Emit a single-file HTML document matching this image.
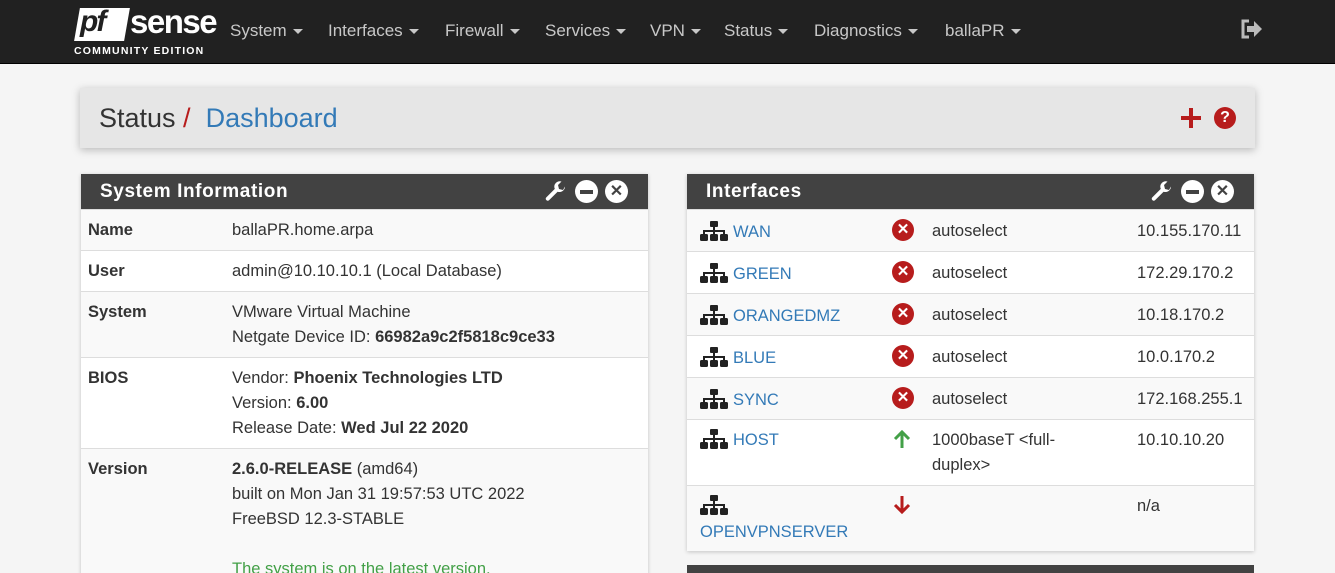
<!DOCTYPE html>
<html><head><meta charset="utf-8"><style>
*{box-sizing:border-box;margin:0;padding:0}
html,body{width:1335px;height:573px;overflow:hidden}
body{background:#f5f5f5;font-family:"Liberation Sans",sans-serif;font-size:16.5px;color:#333;position:relative}
.nav{position:absolute;left:0;top:0;width:1335px;height:64px;background:#212121;border-bottom:1px solid #000}
.nav .m{position:absolute;top:21px;color:#c8c8c8;font-size:17px}
.car{display:inline-block;width:0;height:0;border-left:5px solid transparent;border-right:5px solid transparent;border-top:5px solid #c8c8c8;vertical-align:middle;margin-left:6px}
.ab{position:absolute}
.crumb{position:absolute;left:80px;top:88px;width:1175px;height:60px;background:#e6e6e6;box-shadow:0 2px 8px rgba(0,0,0,.25)}
.panel{position:absolute;background:#fff;box-shadow:0 1px 4px rgba(0,0,0,.2);overflow:hidden}
.ph{position:absolute;left:0;top:0;right:0;height:35px;background:#424242;color:#fff;font-weight:bold;font-size:19px;padding:7px 19px;letter-spacing:.6px}
.row{position:absolute;left:0;right:0;border-top:1px solid #ddd;line-height:25px}
.g{background:#f9f9f9}
.lbl{position:absolute;left:7px;font-weight:bold}
.val{position:absolute;left:151px}
a{color:#337ab7;text-decoration:none}
.x{position:absolute;width:22px;height:22px;border-radius:50%;background:#b71c1c;color:#fff;font-weight:bold;font-size:15px;text-align:center;line-height:22px}
</style></head><body>
<div class="nav">
 <div class="ab" style="left:77px;top:8px;width:50px;height:33px;background:#fff;transform:skewX(-10deg)"></div>
 <div class="ab" style="left:80px;top:5px;font-size:30px;font-weight:bold;font-style:italic;color:#212121;letter-spacing:-2px">pf</div>
 <div class="ab" style="left:130px;top:3px;font-size:33px;font-weight:bold;color:#fff;letter-spacing:-1.5px">sense</div>
 <div class="ab" style="left:74px;top:45px;font-size:10.5px;font-weight:bold;color:#fff;letter-spacing:1.2px">COMMUNITY EDITION</div>
 <div class="m" style="left:230px">System<span class="car"></span></div>
 <div class="m" style="left:328px">Interfaces<span class="car"></span></div>
 <div class="m" style="left:445px">Firewall<span class="car"></span></div>
 <div class="m" style="left:545px">Services<span class="car"></span></div>
 <div class="m" style="left:650px">VPN<span class="car"></span></div>
 <div class="m" style="left:724px">Status<span class="car"></span></div>
 <div class="m" style="left:814px">Diagnostics<span class="car"></span></div>
 <div class="m" style="left:945px">ballaPR<span class="car"></span></div>
 <svg class="ab" style="left:1240px;top:19px" width="24" height="20" viewBox="0 0 24 20"><path d="M9 2H3v16h6" fill="none" stroke="#bbb" stroke-width="3"/><path d="M7 7h7V2l8 8-8 8v-5H7z" fill="#bbb"/></svg>
</div>
<div class="crumb">
 <div class="ab" style="left:19px;top:15px;font-size:27px;color:#333">Status <span style="color:#b71c1c">/</span>&nbsp;&nbsp;<span style="color:#337ab7">Dashboard</span></div>
 <svg class="ab" style="left:1101px;top:20px" width="20" height="20"><path d="M10 0v20M0 10h20" stroke="#b71c1c" stroke-width="4"/></svg>
 <div class="x" style="left:1134px;top:19px;font-size:16px">?</div>
</div>

<svg width="0" height="0" style="position:absolute"><defs>
<symbol id="wr" viewBox="0 0 24 24"><path d="M21 6.5a5.5 5.5 0 0 1-7.4 5.2L5 20.3a2 2 0 0 1-2.8-2.8l8.6-8.6A5.5 5.5 0 0 1 17.5 1.5l-3.5 3.5 1 4 4 1z" fill="#fff"/></symbol>
<symbol id="net" viewBox="0 0 30 20"><rect x="11" y="0" width="8" height="6" rx="1"/><rect x="14" y="6" width="2" height="4"/><rect x="4" y="9" width="22" height="2"/><rect x="4" y="9" width="2" height="5"/><rect x="24" y="9" width="2" height="5"/><rect x="14" y="9" width="2" height="5"/><rect x="1" y="13" width="8" height="7" rx="1.5"/><rect x="11" y="13" width="8" height="7" rx="1.5"/><rect x="21" y="13" width="8" height="7" rx="1.5"/></symbol>
</defs></svg>

<div class="panel" style="left:81px;top:174px;width:567px;height:420px">
 <div class="ph">System Information</div>
 <svg class="ab" style="left:463px;top:6px" width="24" height="24"><use href="#wr"/></svg>
 <div class="ab" style="left:494px;top:6px;width:23px;height:23px;border-radius:50%;background:#fff"><div style="margin:10px 5px;height:4px;background:#424242"></div></div>
 <div class="ab" style="left:524px;top:6px;width:23px;height:23px;border-radius:50%;background:#fff;color:#424242;font-weight:bold;text-align:center;line-height:23px;font-size:16px">✕</div>
 <div class="row g" style="top:35px;height:41px;padding-top:8px"><span class="lbl">Name</span><span class="val">ballaPR.home.arpa</span></div>
 <div class="row" style="top:76px;height:41px;padding-top:8px"><span class="lbl">User</span><span class="val">admin@10.10.10.1 (Local Database)</span></div>
 <div class="row g" style="top:117px;height:66px;padding-top:8px"><span class="lbl">System</span><span class="val">VMware Virtual Machine<br>Netgate Device ID: <b>66982a9c2f5818c9ce33</b></span></div>
 <div class="row" style="top:183px;height:91px;padding-top:8px"><span class="lbl">BIOS</span><span class="val">Vendor: <b>Phoenix Technologies LTD</b><br>Version: <b>6.00</b><br>Release Date: <b>Wed Jul 22 2020</b></span></div>
 <div class="row g" style="top:274px;height:150px;padding-top:8px"><span class="lbl">Version</span><span class="val"><b>2.6.0-RELEASE</b> (amd64)<br>built on Mon Jan 31 19:57:53 UTC 2022<br>FreeBSD 12.3-STABLE<br><br><span style="color:#43a047">The system is on the latest version.</span></span></div>
</div>

<div class="panel" style="left:687px;top:174px;width:567px;height:377px">
 <div class="ph">Interfaces</div>
 <svg class="ab" style="left:463px;top:6px" width="24" height="24"><use href="#wr"/></svg>
 <div class="ab" style="left:494px;top:6px;width:23px;height:23px;border-radius:50%;background:#fff"><div style="margin:10px 5px;height:4px;background:#424242"></div></div>
 <div class="ab" style="left:524px;top:6px;width:23px;height:23px;border-radius:50%;background:#fff;color:#424242;font-weight:bold;text-align:center;line-height:23px;font-size:16px">✕</div>
 <div class="row g" style="top:35px;height:42px"><svg class="ab" style="left:12px;top:11px" width="30" height="20" fill="#222"><use href="#net"/></svg><a class="ab" style="left:46px;top:10px" href="#">WAN</a><div class="x" style="left:205px;top:9px">✕</div><span class="ab" style="left:245px;top:9px">autoselect</span><span class="ab" style="left:450px;top:9px">10.155.170.11</span></div>
 <div class="row" style="top:77px;height:42px"><svg class="ab" style="left:12px;top:11px" width="30" height="20" fill="#222"><use href="#net"/></svg><a class="ab" style="left:46px;top:10px" href="#">GREEN</a><div class="x" style="left:205px;top:9px">✕</div><span class="ab" style="left:245px;top:9px">autoselect</span><span class="ab" style="left:450px;top:9px">172.29.170.2</span></div>
 <div class="row g" style="top:119px;height:42px"><svg class="ab" style="left:12px;top:11px" width="30" height="20" fill="#222"><use href="#net"/></svg><a class="ab" style="left:46px;top:10px" href="#">ORANGEDMZ</a><div class="x" style="left:205px;top:9px">✕</div><span class="ab" style="left:245px;top:9px">autoselect</span><span class="ab" style="left:450px;top:9px">10.18.170.2</span></div>
 <div class="row" style="top:161px;height:42px"><svg class="ab" style="left:12px;top:11px" width="30" height="20" fill="#222"><use href="#net"/></svg><a class="ab" style="left:46px;top:10px" href="#">BLUE</a><div class="x" style="left:205px;top:9px">✕</div><span class="ab" style="left:245px;top:9px">autoselect</span><span class="ab" style="left:450px;top:9px">10.0.170.2</span></div>
 <div class="row g" style="top:203px;height:42px"><svg class="ab" style="left:12px;top:11px" width="30" height="20" fill="#222"><use href="#net"/></svg><a class="ab" style="left:46px;top:10px" href="#">SYNC</a><div class="x" style="left:205px;top:9px">✕</div><span class="ab" style="left:245px;top:9px">autoselect</span><span class="ab" style="left:450px;top:9px">172.168.255.1</span></div>
 <div class="row" style="top:245px;height:66px"><svg class="ab" style="left:12px;top:9px" width="30" height="20" fill="#222"><use href="#net"/></svg><a class="ab" style="left:46px;top:8px" href="#">HOST</a><svg class="ab" style="left:205px;top:9px" width="20" height="20"><path d="M10 19V3M3 10l7-7 7 7" fill="none" stroke="#43a047" stroke-width="3"/></svg><span class="ab" style="left:245px;top:8px">1000baseT &lt;full-<br>duplex&gt;</span><span class="ab" style="left:450px;top:8px">10.10.10.20</span></div>
 <div class="row g" style="top:311px;height:66px"><svg class="ab" style="left:12px;top:9px" width="30" height="20" fill="#222"><use href="#net"/></svg><a class="ab" style="left:13px;top:34px" href="#">OPENVPNSERVER</a><svg class="ab" style="left:205px;top:9px" width="20" height="20"><path d="M10 1v16M3 10l7 7 7-7" fill="none" stroke="#b71c1c" stroke-width="3"/></svg><span class="ab" style="left:450px;top:8px">n/a</span></div>
</div>
<div class="ab" style="left:687px;top:565px;width:567px;height:20px;background:#424242"></div>
</body></html>
